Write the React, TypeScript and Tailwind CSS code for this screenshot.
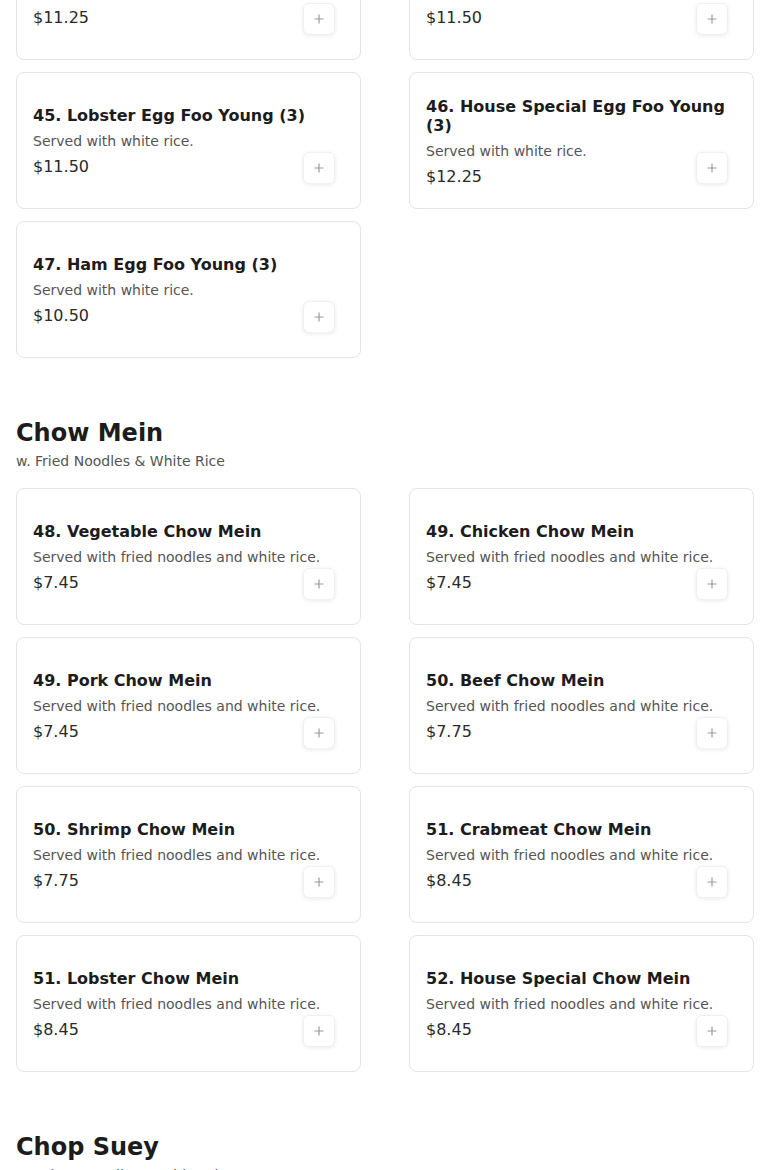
import React from "react";

type Item = { name: string; desc: string; price: string };

const egg: Item[] = [
  { name: "43. Shrimp Egg Foo Young (3)", desc: "Served with white rice.", price: "$11.25" },
  { name: "44. Crabmeat Egg Foo Young (3)", desc: "Served with white rice.", price: "$11.50" },
  { name: "45. Lobster Egg Foo Young (3)", desc: "Served with white rice.", price: "$11.50" },
  { name: "46. House Special Egg Foo Young (3)", desc: "Served with white rice.", price: "$12.25" },
  { name: "47. Ham Egg Foo Young (3)", desc: "Served with white rice.", price: "$10.50" },
];

const nd = "Served with fried noodles and white rice.";
const chow: Item[] = [
  { name: "48. Vegetable Chow Mein", desc: nd, price: "$7.45" },
  { name: "49. Chicken Chow Mein", desc: nd, price: "$7.45" },
  { name: "49. Pork Chow Mein", desc: nd, price: "$7.45" },
  { name: "50. Beef Chow Mein", desc: nd, price: "$7.75" },
  { name: "50. Shrimp Chow Mein", desc: nd, price: "$7.75" },
  { name: "51. Crabmeat Chow Mein", desc: nd, price: "$8.45" },
  { name: "51. Lobster Chow Mein", desc: nd, price: "$8.45" },
  { name: "52. House Special Chow Mein", desc: nd, price: "$8.45" },
];

function Card({ item }: { item: Item }) {
  return (
    <div className="relative flex h-[137px] items-center rounded-lg border border-[#e4e4e4] bg-white px-4">
      <div className="flex-1 min-w-0 pt-[2px]">
        <div className="text-[16px] font-bold leading-[19px] text-[#1c1c1c]">{item.name}</div>
        <div className="mt-[6px] text-[14px] leading-[20px] text-[#555555]">{item.desc}</div>
        <div className="mt-[6px] text-[16px] leading-[20px] text-[#2a2a2a]">{item.price}</div>
      </div>
      <button className="absolute bottom-[24px] right-[25px] flex h-[32px] w-[32px] items-center justify-center rounded-md border border-[#f0f0f0] bg-white shadow-[0_1px_4px_rgba(0,0,0,0.08)]">
        <svg width="12" height="12" viewBox="0 0 12 12">
          <path d="M6 1.5v9M1.5 6h9" stroke="#9a9a9a" strokeWidth="1.2" />
        </svg>
      </button>
    </div>
  );
}

function Section({ title, sub, items, showHeader = true }: { title: string; sub: string; items: Item[]; showHeader?: boolean }) {
  return (
    <section>
      {showHeader && (
        <>
          <h2 className="text-[24px] font-bold leading-[32px] text-[#1c1c1c]">{title}</h2>
          <p className="mt-[2px] text-[14px] leading-[20px] text-[#555555]">{sub}</p>
        </>
      )}
      <div className={`grid grid-cols-2 gap-x-12 gap-y-3 ${showHeader ? "mt-[17px]" : ""}`}>
        {items.map((it, i) => (
          <Card key={i} item={it} />
        ))}
      </div>
    </section>
  );
}

export default function App() {
  return (
    <div className="h-[1170px] overflow-hidden bg-white" style={{ fontFamily: '"DejaVu Sans", sans-serif' }}>
      <div className="-mt-[77px] px-4">
        <Section title="Egg Foo Young" sub="" items={egg} showHeader={false} />
        <div className="mt-[59px]">
          <Section title="Chow Mein" sub="w. Fried Noodles & White Rice" items={chow} />
        </div>
        <div className="mt-[59px]">
          <Section title="Chop Suey" sub="w. Crispy Noodles & White Rice" items={[]} />
        </div>
      </div>
    </div>
  );
}
